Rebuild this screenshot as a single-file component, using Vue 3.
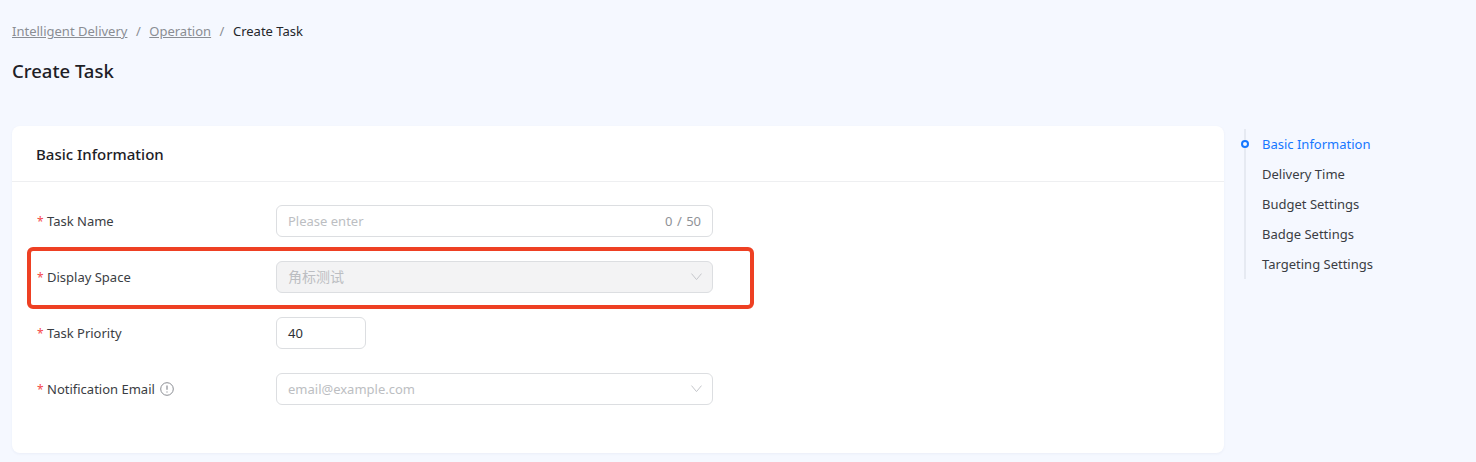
<script setup>
const anchors = ['Basic Information', 'Delivery Time', 'Budget Settings', 'Badge Settings', 'Targeting Settings']
</script>

<template>
  <div class="page">
    <nav class="crumbs">
      <a class="crumb-link">Intelligent Delivery</a>
      <span class="sep">/</span>
      <a class="crumb-link">Operation</a>
      <span class="sep">/</span>
      <span class="crumb-current">Create Task</span>
    </nav>
    <h1 class="title">Create Task</h1>
    <div class="body">
      <section class="card">
        <header class="card-head">Basic Information</header>
        <form class="form">
          <div class="row">
            <label class="label"><i class="star">*</i>Task Name</label>
            <div class="control"><span class="ph">Please enter</span><span class="count">0 / 50</span></div>
          </div>
          <div class="row highlighted">
            <label class="label"><i class="star">*</i>Display Space</label>
            <div class="control disabled">
              <span class="ph cjk">角标测试</span>
              <svg class="chev" viewBox="0 0 12 12" width="12" height="12"><path d="M1.5 2.6 6.5 8.6l5-6" fill="none" stroke="currentColor" stroke-width="1" /></svg>
            </div>
            <div class="mark"></div>
          </div>
          <div class="row">
            <label class="label"><i class="star">*</i>Task Priority</label>
            <div class="control short"><span class="val">40</span></div>
          </div>
          <div class="row">
            <label class="label"><i class="star">*</i>Notification Email
              <svg class="info" viewBox="0 0 14 14" width="14" height="14"><circle cx="7" cy="7" r="6.3" fill="none" stroke="currentColor" stroke-width="1" /><path d="M7 3.4v4.4M7 9.4v1.2" fill="none" stroke="currentColor" stroke-width="1.2" /></svg>
            </label>
            <div class="control">
              <span class="ph">email@example.com</span>
              <svg class="chev" viewBox="0 0 12 12" width="12" height="12"><path d="M1.5 2.6 6.5 8.6l5-6" fill="none" stroke="currentColor" stroke-width="1" /></svg>
            </div>
          </div>
        </form>
      </section>
      <aside class="anchor">
        <a v-for="(a, i) in anchors" :key="a" class="anchor-item" :class="{ active: i === 0 }">{{ a }}</a>
      </aside>
    </div>
  </div>
</template>

<style>
html, body { margin: 0; background: #f5f8ff; }
</style>

<style scoped>
.page {
  height: 462px;
  box-sizing: border-box;
  overflow: hidden;
  padding: 21px 0 0 12px;
  background: #f5f8ff;
  font-family: "Noto Sans", "Noto Sans CJK SC", sans-serif;
  font-size: 13px;
  color: #24262b;
}
.crumbs { display: flex; align-items: center; height: 20px; line-height: 20px; }
.crumb-link { color: #8a8d93; text-decoration: underline; }
.sep { color: #8a8d93; margin: 0 8.5px; }
.crumb-current { color: #24262b; }
.title { margin: 17px 0 0; height: 26px; font-size: 18.5px; line-height: 26px; font-weight: 500; color: #1d2026; }
.body { display: flex; margin-top: 42px; align-items: flex-start; }
.card {
  width: 1212px;
  height: 327px;
  background: #fff;
  border-radius: 8px;
  box-shadow: 0 1px 3px rgba(40, 60, 120, 0.05);
}
.card-head {
  height: 56px;
  box-sizing: border-box;
  padding-left: 24px;
  line-height: 56px;
  border-bottom: 1px solid #eeeff1;
  font-size: 15px;
  font-weight: 500;
  color: #1d2026;
}
.form { padding: 23px 0 0 24px; display: flex; flex-direction: column; gap: 24px; }
.row { position: relative; display: flex; align-items: center; height: 32px; }
.label { width: 240px; color: #3a3d43; display: flex; align-items: center; }
.star { font-style: normal; color: #f5484a; width: 10px; padding-left: 1px; flex: none; font-size: 12px; }
.info { color: #8a8d93; margin-left: 5px; }
.control {
  width: 437px;
  height: 32px;
  box-sizing: border-box;
  padding: 0 11px;
  border: 1px solid #dcdee1;
  border-radius: 6px;
  background: #fff;
  display: flex;
  align-items: center;
  justify-content: space-between;
}
.control.short { width: 90px; }
.control.disabled { background: #f3f3f4; }
.ph { color: #bcbec2; }
.cjk { font-size: 14px; line-height: 20px; margin-top: -1px; }
.count { color: #8f9297; word-spacing: 1px; }
.val { color: #2c2f35; }
.chev { color: #c5c7cb; margin-right: -0.5px; }
.mark {
  position: absolute;
  left: -9px;
  top: -14px;
  width: 727px;
  height: 62px;
  box-sizing: border-box;
  border: 4px solid #ee4023;
  border-radius: 6px;
  pointer-events: none;
}
.anchor {
  margin: 3px 0 0 20px;
  width: 200px;
  box-sizing: border-box;
  border-left: 2px solid #e6eaf2;
  padding-left: 16px;
  display: flex;
  flex-direction: column;
}
.anchor-item { position: relative; height: 30px; line-height: 30px; color: #3a3d43; }
.anchor-item.active { color: #1677ff; }
.anchor-item.active::before {
  content: "";
  position: absolute;
  left: -21px;
  top: 11px;
  width: 8px;
  height: 8px;
  box-sizing: border-box;
  border: 2px solid #1677ff;
  border-radius: 50%;
  background: #f5f8ff;
}
</style>
